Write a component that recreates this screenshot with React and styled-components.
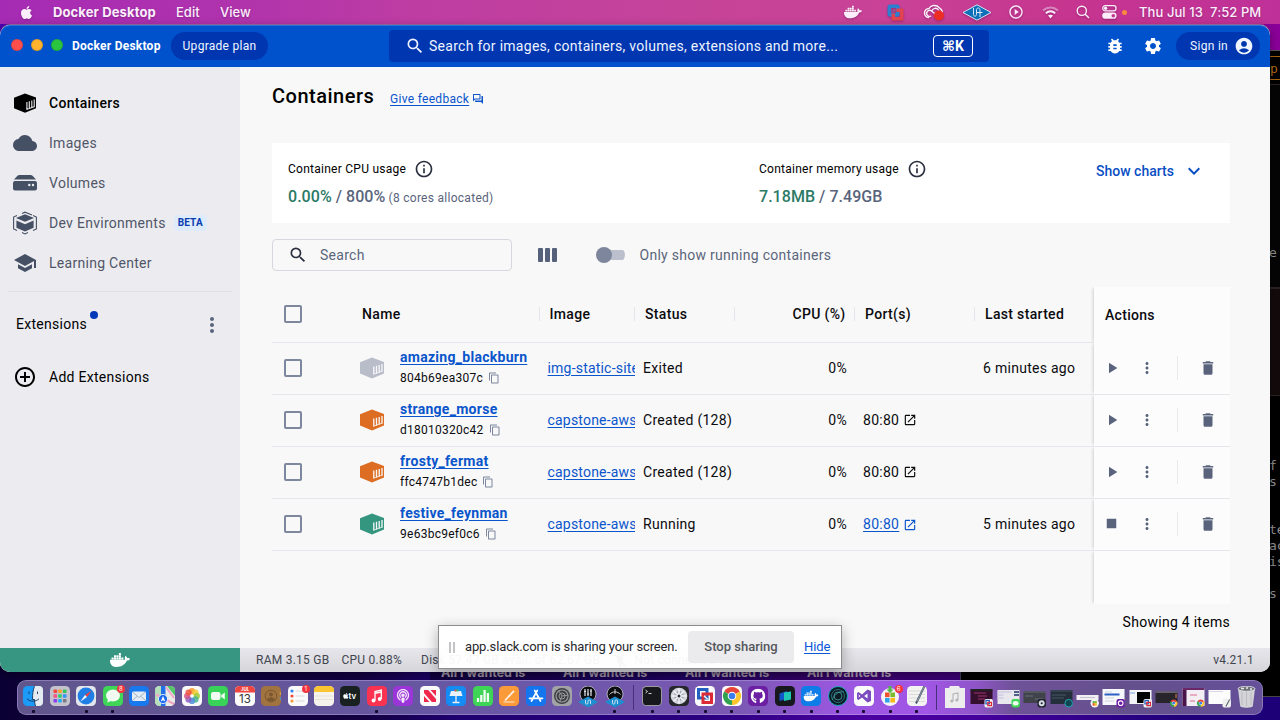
import React from "react";
import styled, { createGlobalStyle, css } from "styled-components";
import {
  MdSearch, MdBugReport, MdSettings, MdAccountCircle, MdCloud, MdSchool, MdMoreVert,
  MdControlPoint, MdInfoOutline, MdPlayArrow, MdStop, MdDelete, MdOutlineContentCopy,
  MdOpenInNew, MdKeyboardArrowDown, MdOutlineQuestionAnswer, MdPlayCircleOutline,
} from "react-icons/md";
import { FaDocker, FaApple, FaGithub, FaPodcast } from "react-icons/fa";

const GlobalStyle = createGlobalStyle`
  *, *::before, *::after { box-sizing: border-box; }
  body { margin: 0; overflow: hidden; font-family: Roboto, "Liberation Sans", sans-serif; }
  svg { display: block; flex: none; }
`;

/* ---------- desktop ---------- */
const Desktop = styled.div`
  position: relative;
  width: 1280px;
  height: 720px;
  overflow: hidden;
  background: linear-gradient(90deg, #0b0033 0%, #12003f 28%, #1f0070 36%, #2b0080 55%, #4b00a0 68%, #42009a 78%, #20007a 92%, #1d0078 100%);
`;

const UpperSky = styled.div`
  position: absolute;
  inset: 0 0 auto 0;
  height: 300px;
  background: linear-gradient(90deg, #5000b0 0%, #8a0098 100%);
`;

const MenuBar = styled.header`
  position: relative;
  height: 24px;
  display: flex;
  align-items: center;
  padding: 0 18px 0 19px;
  color: #fbeefa;
  font-family: Inter, sans-serif;
  font-size: 13px;
  font-weight: 500;
  background: linear-gradient(90deg, #a52bb4 0%, #b033ad 18%, #bd3da3 32%, #c64498 55%, #c94297 70%, #c6358f 84%, #bf3199 100%);
  svg { filter: drop-shadow(0 1px 1px rgba(60, 0, 60, 0.35)); }
`;

const MenuItem = styled.span`
  width: ${(p) => p.$w}px;
  margin-left: ${(p) => p.$gap || 0}px;
  font-weight: ${(p) => (p.$bold ? 700 : 500)};
  letter-spacing: ${(p) => p.$ls || 0}px;
  white-space: pre;
  text-shadow: 0 1px 2px rgba(60, 0, 60, 0.3);
`;

const MenuSpacer = styled.div`flex: 1;`;

const TraySlot = styled.span`
  width: ${(p) => p.$w}px;
  display: flex;
  justify-content: center;
`;

const MicDot = styled.i`
  width: 5px;
  height: 5px;
  border-radius: 50%;
  background: #f98a3c;
`;

/* ---------- windows behind ---------- */
const Terminal = styled.div`
  position: absolute;
  left: 961px;
  top: 50px;
  width: 330px;
  height: 647px;
  background: #000;
  border-top: 1px solid #555;
  border-bottom: 1px solid #444;
  font: 13px/16px "DejaVu Sans Mono", monospace;
  color: #8f8f8f;
`;

const TermPrompt = styled.div`
  margin: 5px 0 0 0;
  height: 24px;
  padding-left: 309px;
  border: 1px solid #a8630f;
  border-width: 1px 0;
  color: #b06c14;
  line-height: 24px;
`;

const TermShade = styled.div`
  margin-top: ${(p) => p.$top}px;
  height: ${(p) => p.$h}px;
  border: 1px solid #2a2222;
  border-width: 1px 0;
  background: ${(p) => p.$bg};
`;

const TermText = styled.div`
  position: absolute;
  left: 308px;
  top: ${(p) => p.$y}px;
`;

const PageBehind = styled.div`
  position: absolute;
  left: 430px;
  top: 640px;
  width: 531px;
  height: 46px;
  padding: 26px 0 0 11px;
  display: flex;
  gap: 122px;
  border-right: 1px solid #3b3550;
  background: linear-gradient(90deg, #12003f, #1f0060 45%, #3a006a 80%, #390070);
  color: #a79aae;
  font: bold 12.5px/14px Inter, sans-serif;
  white-space: nowrap;
  span { width: 0; }
  overflow: hidden;
`;

/* ---------- docker window ---------- */
const AppWindow = styled.div`
  position: absolute;
  left: 0;
  top: 25px;
  width: 1270px;
  height: 647px;
  display: flex;
  flex-direction: column;
  border-radius: 10px;
  overflow: hidden;
  background: #f8f8f8;
  box-shadow: 0 -1px 0 rgba(160, 130, 150, 0.75), 0 2px 8px rgba(0, 0, 0, 0.35);
`;

const TitleBar = styled.div`
  flex: none;
  height: 42px;
  display: flex;
  align-items: center;
  padding: 0 10px 0 11px;
  color: #fff;
  background: #0052cc;
  box-shadow: inset 0 1px 0 #2b72d8;
  border-radius: 10px 10px 0 0;
`;

const Light = styled.i`
  width: 12px;
  height: 12px;
  margin-right: 8px;
  margin-top: -2px;
  border-radius: 50%;
  background: ${(p) => p.$c};
  border: 1px solid rgba(0, 0, 0, 0.12);
`;

const AppName = styled.strong`
  width: 99px;
  margin: -1px 0 0 1px;
  font-size: 12px;
  font-weight: 700;
  letter-spacing: 0.24px;
`;

const Pill = styled.button`
  width: ${(p) => p.$w}px;
  height: 28px;
  display: flex;
  align-items: center;
  justify-content: ${(p) => (p.$end ? "flex-end" : "center")};
  gap: 6px;
  padding: 0 ${(p) => (p.$end ? 6 : 0)}px 0 0;
  border: 0;
  border-radius: 14px;
  color: #f0f5ff;
  background: #0037b0;
  font: 12px Roboto, sans-serif;
  letter-spacing: 0.28px;
`;

const GlobalSearch = styled.div`
  width: 600px;
  height: 32px;
  margin-left: 121px;
  display: flex;
  align-items: center;
  padding: 0 16px;
  border-radius: 4px;
  background: #0037b0;
  color: #eef3ff;
  font-size: 14px;
  letter-spacing: 0.28px;
  span { flex: 1; margin-left: 4px; white-space: nowrap; }
`;

const Shortcut = styled.kbd`
  width: 40px;
  height: 22px;
  display: flex;
  align-items: center;
  justify-content: center;
  border: 1px solid #fff;
  border-radius: 4px;
  color: #fff;
  font: bold 14px Roboto, "DejaVu Sans", sans-serif;
  letter-spacing: 0;
`;

const HeaderIcons = styled.div`
  flex: 1;
  display: flex;
  justify-content: flex-end;
  gap: 18px;
  margin-right: 13px;
`;

const Body = styled.div`
  flex: 1;
  display: flex;
  min-height: 0;
`;

const Sidebar = styled.nav`
  width: 240px;
  flex: none;
  padding-top: 16px;
  background: #ececf0;
`;

const NavItem = styled.div`
  height: 40px;
  display: flex;
  align-items: center;
  padding-left: 13px;
  color: ${(p) => (p.$active ? "#000" : "#505668")};
  font-size: 14px;
  font-weight: ${(p) => (p.$active ? 500 : 400)};
  letter-spacing: 0.28px;
  svg { width: 24px; height: 24px; margin-right: 12px; color: ${(p) => (p.$active ? "#000" : "#455065")}; }
`;

const BetaTag = styled.span`
  height: 16px;
  margin-left: 8px;
  padding: 0 4px;
  border-radius: 4px;
  background: #deebfb;
  color: #0a3cb0;
  font-size: 10px;
  font-weight: 700;
  letter-spacing: 0.15px;
  line-height: 16px;
`;

const Divider = styled.hr`
  margin: 8px 8px 0;
  border: 0;
  border-top: 1px solid #dedee4;
`;

const ExtensionsHead = styled.div`
  height: 32px;
  margin: 17px 16px 0;
  display: flex;
  align-items: center;
  justify-content: space-between;
  color: #000;
  font-size: 14px;
  letter-spacing: 0.28px;
  svg { color: #5a667d; }
`;

const WithDot = styled.span`
  position: relative;
  margin-top: -2px;
  &::after {
    content: "";
    position: absolute;
    right: -11px;
    top: -5px;
    width: 8px;
    height: 8px;
    border-radius: 50%;
    background: #0038b8;
  }
`;

const AddExtensions = styled(NavItem)`
  margin-top: 16px;
  color: #000;
  svg { color: #000; }
`;

const Main = styled.main`
  flex: 1;
  min-width: 0;
  display: flex;
  flex-direction: column;
  padding: 0 40px 0 32px;
`;

const Heading = styled.div`
  height: 76px;
  display: flex;
  padding-top: 16px;
  h1 { width: 118px; margin: 0; font-size: 20px; line-height: 26px; font-weight: 500; letter-spacing: 0.5px; }
`;

const Feedback = styled.a`
  height: 16px;
  margin-top: 8px;
  display: flex;
  align-items: center;
  gap: 3px;
  color: #0a55cc;
  font-size: 12px;
  letter-spacing: 0.3px;
  span { text-decoration: underline; text-underline-offset: 2px; }
`;

const UsageCard = styled.section`
  height: 80px;
  flex: none;
  display: flex;
  padding: 14px 24px 0 16px;
  background: #fff;
`;

const Usage = styled.div`
  width: ${(p) => p.$w}px;
  font-size: 12px;
  letter-spacing: 0.26px;
`;

const UsageLabel = styled.div`
  height: 24px;
  display: flex;
  align-items: center;
  gap: 8px;
  svg { color: #2b3040; }
`;

const UsageValue = styled.div`
  margin-top: 5px;
  line-height: 22px;
  color: #59647c;
  font-size: 12px;
  letter-spacing: 0.28px;
  b { font-size: 16px; font-weight: 500; letter-spacing: 0.04px; }
  b:first-child { color: #2b7a66; }
`;

const ShowCharts = styled.button`
  height: 28px;
  margin-left: auto;
  display: flex;
  align-items: center;
  gap: 8px;
  padding: 0;
  border: 0;
  background: none;
  color: #0a4fc4;
  font: 500 14px Roboto, sans-serif;
  letter-spacing: 0.02px;
`;

const FilterRow = styled.div`
  height: 64px;
  flex: none;
  display: flex;
  align-items: center;
  color: #5b667c;
  font-size: 14px;
  letter-spacing: 0.28px;
`;

const SearchField = styled.div`
  width: 240px;
  height: 32px;
  display: flex;
  align-items: center;
  gap: 12px;
  padding-left: 15px;
  border: 1px solid #d6d8df;
  border-radius: 4px;
  svg { color: #2b3040; }
`;

const ColumnsButton = styled.div`
  width: 19px;
  height: 14px;
  margin-left: 26px;
  display: flex;
  justify-content: space-between;
  i { width: 5px; border-radius: 1px; background: #56627a; }
`;

const Switch = styled.div`
  width: 29px;
  height: 16px;
  margin: 0 14.5px 0 39px;
  display: flex;
  align-items: center;
  background: linear-gradient(#bcc0cc, #bcc0cc) 8px 3px / 21px 10px no-repeat;
  border-radius: 8px;
  i { width: 16px; height: 16px; border-radius: 50%; background: #7d869c; }
`;

/* ---------- table ---------- */
const COLUMNS = "80px 188px 95px 100px 120px 120px 119px 136px";

const Table = styled.div`
  height: 317px;
  flex: none;
  display: flex;
  flex-direction: column;
  font-size: 14px;
  color: #0b0b0f;
`;

const Row = styled.div`
  flex: none;
  display: grid;
  grid-template-columns: ${COLUMNS};
  height: ${(p) => (p.$head ? 56 : 52)}px;
  border-bottom: 1px solid #e6e6ec;
`;

const HeadCell = styled.div`
  display: flex;
  align-items: center;
  justify-content: ${(p) => (p.$right ? "flex-end" : "flex-start")};
  padding: 0 9.5px 2px ${(p) => (p.$snug ? 9.5 : 10)}px;
  font-weight: 500;
  letter-spacing: 0.33px;
  white-space: nowrap;
  background: ${(p) =>
    p.$rule ? "linear-gradient(#e4e5ea, #e4e5ea) right -1px top 20px / 2px 14px no-repeat" : "none"};
`;

const Cell = styled.div`
  min-width: 0;
  display: flex;
  align-items: center;
  justify-content: ${(p) => (p.$right ? "flex-end" : "flex-start")};
  padding: 0 ${(p) => (p.$clip ? 0 : 8)}px 2px ${(p) => (p.$clip ? 7.5 : 8)}px;
  overflow: ${(p) => (p.$clip ? "hidden" : "visible")};
  letter-spacing: 0.28px;
  white-space: nowrap;
`;

const CheckCell = styled.div`
  display: flex;
  align-items: center;
  padding: 0 0 ${(p) => (p.$head ? 1 : 0)}px 12px;
`;

const Checkbox = styled.i`
  width: 18px;
  height: 18px;
  margin-top: -1px;
  border: 2px solid #7d879d;
  border-radius: 2px;
`;

const Sticky = css`
  background: #fcfcfc;
  box-shadow: -2px 0 3px -1px rgba(0, 0, 0, 0.16);
  clip-path: inset(0 0 0 -6px);
`;

const ActionHead = styled.div`
  ${Sticky}
  padding-left: 11px;
  line-height: 56px;
  font-weight: 500;
  letter-spacing: 0.3px;
`;

const ActionCell = styled.div`
  ${Sticky}
  display: flex;
  align-items: center;
  padding-bottom: 2px;
  color: #59647c;
`;

const ActionFill = styled.div`
  ${Sticky}
  flex: 1;
  width: 136px;
  margin-left: 822px;
`;

const ActionSlot = styled.span`
  width: ${(p) => p.$w}px;
  flex: none;
  display: flex;
  justify-content: center;
`;

const ActionRule = styled.i`
  width: 1px;
  height: 24px;
  margin: 0 21px 0 12px;
  flex: none;
  background: #ebebef;
`;

const Link = styled.a`
  color: #0a55cc;
  font-weight: ${(p) => (p.$bold ? 700 : 400)};
  text-decoration: underline;
  text-underline-offset: 2px;
  letter-spacing: ${(p) => (p.$tight ? 0.2 : 0.28)}px;
`;

const NameBlock = styled.div`
  margin: 0 0 0 16px;
  line-height: 20px;
`;

const IdLine = styled.div`
  display: flex;
  align-items: center;
  gap: 5px;
  height: 21px;
  font-size: 12px;
  letter-spacing: 0.26px;
  svg { color: #7d879d; }
`;

const Ports = styled.span`
  display: flex;
  align-items: center;
  gap: 4px;
  color: ${(p) => (p.$live ? "#0a55cc" : "inherit")};
  svg { margin-top: ${(p) => (p.$live ? 2 : 0)}px; }
`;

const Count = styled.div`
  padding-top: 10px;
  text-align: right;
  font-size: 14px;
  line-height: 16px;
  letter-spacing: 0.28px;
`;

/* ---------- status bar ---------- */
const StatusBar = styled.footer`
  flex: none;
  height: 24px;
  display: flex;
  background: linear-gradient(#e6e6ec, #d6d6da);
  color: #41454f;
  font-size: 12px;
  letter-spacing: 0.25px;
  line-height: 24px;
  white-space: nowrap;
`;

const EngineState = styled.div`
  width: 240px;
  display: flex;
  align-items: center;
  justify-content: center;
  color: #fff;
  background: #369681;
`;

const Stat = styled.span`
  margin-left: ${(p) => p.$gap}px;
  display: flex;
  align-items: center;
  gap: 8px;
`;

const Version = styled.span`
  margin: 0 16px 0 auto;
`;

/* ---------- share prompt ---------- */
const SharePrompt = styled.div`
  position: absolute;
  left: 438px;
  top: 625px;
  width: 404px;
  height: 44px;
  display: flex;
  align-items: center;
  padding-left: 10px;
  border: 1px solid #8c8c8e;
  background: rgba(255, 255, 255, 0.955);
  box-shadow: 0 4px 14px rgba(0, 0, 0, 0.3);
  color: #26272b;
  font-size: 13px;
  white-space: nowrap;
`;

const Grip = styled.i`
  width: 6px;
  height: 11px;
  margin-right: 10px;
  border: 2px solid #c4c4c6;
  border-width: 0 2px;
`;

const StopButton = styled.button`
  width: 106px;
  height: 32px;
  margin: 0 10px 0 0;
  padding: 0 0 1px;
  border: 0;
  border-radius: 4px;
  background: rgba(232, 232, 234, 0.85);
  color: #54565c;
  font: 500 13px Roboto, sans-serif;
`;

const HideLink = styled.a`
  margin-top: -1px;
  color: #0b57d8;
  text-decoration: underline;
  text-underline-offset: 2px;
  letter-spacing: -0.1px;
`;

const ShareText = styled.span`
  width: 223px;
  margin-top: -1px;
  letter-spacing: -0.13px;
`;

/* ---------- dock ---------- */
const DockBar = styled.div`
  position: absolute;
  left: 17px;
  top: 680px;
  width: 1246px;
  height: 35px;
  display: flex;
  padding-left: 2px;
  border: 1px solid rgba(200, 180, 240, 0.4);
  border-radius: 9px;
  background: linear-gradient(90deg, #61568b 0%, #63569a 22%, #6a57a6 40%, #7b58b4 58%, #9a57df 66%, #a156e6 73%, #8f55c8 77%, #6f5298 80%, #64508c 90%, #65509a 100%);
`;

const DockItem = styled.div`
  position: relative;
  width: 26.45px;
  flex: none;
  display: flex;
  flex-direction: column;
  align-items: center;
  padding-top: 5px;
  &::after {
    content: "";
    position: absolute;
    top: 29px;
    width: 3px;
    height: 3px;
    border-radius: 1px;
    background: ${(p) => (p.$running ? "#130a2c" : "transparent")};
  }
`;

const DockRule = styled.i`
  width: 1px;
  height: 25px;
  margin: 4px ${(p) => p.$m}px;
  background: #46307c;
`;

const Badge = styled.b`
  position: absolute;
  top: 4px;
  right: 1px;
  width: 8px;
  height: 8px;
  border-radius: 50%;
  background: #f5333c;
  color: #fff;
  font: 6px/8px Inter, sans-serif;
  text-align: center;
`;

const ContainerIcon = ({ color }) => (
  <svg width="24" height="24" viewBox="0 0 24 24">
    <path d="M12 1.500 24 6v11.600L12 22.500 0 17.600V6.200z" fill={color} />
    <path d="M13.800 10.600v7.600M16.500 9.800v7.600M19.200 9v7.500M22 8v7.500" stroke="#f8f8f8" strokeWidth="1.300" fill="none" />
    <path d="M13.200 18.300 22.600 15" stroke="#f8f8f8" strokeWidth=".8" />
  </svg>
);

const NavContainerIcon = () => (
  <svg viewBox="0 0 24 24">
    <path d="M12 2.500 23 6.600v10.600L12 21.800 1 17.200V6.800z" fill="currentColor" />
    <path d="M13.900 11v7.400M16.300 10.200v7.400M18.800 9.400v7.400M21.200 8.500v7.400M13.400 18.600l8.400-3.200" stroke="#ececf0" strokeWidth="1.100" fill="none" />
  </svg>
);

const VolumeIcon = () => (
  <svg viewBox="0 0 24 24">
    <path d="M6.500 4h11q1.200 0 2 .8l3.500 3.800H1L4.500 4.800Q5.300 4 6.500 4z" fill="currentColor" />
    <path d="M2 10h20a2 2 0 0 1 2 2v5.500a2 2 0 0 1-2 2H2a2 2 0 0 1-2-2V12a2 2 0 0 1 2-2z" fill="currentColor" />
    <circle cx="16.300" cy="14" r="1.200" fill="#ececf0" />
    <circle cx="20" cy="14" r="1.200" fill="#ececf0" />
  </svg>
);

const DevEnvIcon = () => (
  <svg viewBox="0 0 24 24" fill="none">
    <path d="m12 3.300 9 3.700-9 3.800L3 7z" fill="currentColor" />
    <path d="m3.400 9.600 8.600 3.600 8.600-3.600v7.200L12 20.600l-8.600-3.800z" fill="currentColor" />
    <path d="M4 4.600.6 6v12L4 19.500M20 4.600 23.400 6v12L20 19.500M9 2.600l3-1.400 7 2.800M9 21.600l3 1.300 3-1.300" stroke="currentColor" strokeWidth="1.100" />
  </svg>
);

/* tray drawings */
const Vmware = () => (
  <svg width="17" height="17" viewBox="0 0 17 17" fill="none">
    <rect x="2.300" y="2.300" width="8.600" height="8.600" rx="1" stroke="#2d7fd0" strokeWidth="3.600" />
    <path d="M9.500 6.300h5.200v8.400H6.300V9.500" stroke="#e2444f" strokeWidth="3.600" />
    <path d="M6.300 9.500V6.300h3.200" stroke="#9c4f8c" strokeWidth="2" />
  </svg>
);
const CreativeCloud = () => (
  <svg width="21" height="17" viewBox="0 0 21 17" fill="none">
    <path d="M6 13.500a4.500 4.500 0 0 1 0-9c1.500-3 7-4.500 10-1 3 2 4 5 2.500 8" stroke="#fbeefa" strokeWidth="1.500" />
    <path d="M8 12a3 3 0 1 1 .5-5l5 4M8.500 7.500C9.500 4 14 3 16 6.500" stroke="#fbeefa" strokeWidth="1.400" />
    <circle cx="16" cy="11.500" r="5" fill="#ee2e24" />
  </svg>
);
const UaDiamond = ({ w = 30, h = 17 }) => (
  <svg width={w} height={h} viewBox="0 0 30 17" fill="none">
    <path d="M15 .8 29 8.500 15 16.200 1 8.500z" fill="#0d70b8" stroke="#d7e6f4" strokeWidth="1" />
    <path d="M11.500 4v6.500c0 2.200 3 2.200 3 0V5.500c0-2 3.500-2 3.500 0V13M14.500 8.500h6" stroke="#d7e6f4" strokeWidth="1" />
  </svg>
);
const Wifi = () => (
  <svg width="17" height="13" viewBox="0 0 17 13" fill="none" strokeWidth="2">
    <path d="M1 4.400C5.500.6 11.500.6 16 4.400" stroke="#fbeefa" strokeOpacity=".45" />
    <path d="M3.800 7.200c3-2.400 6.400-2.400 9.400 0" stroke="#fbeefa" />
    <path d="M8.500 12.400 6 9.600c1.500-1.200 3.500-1.200 5 0z" fill="#fbeefa" />
  </svg>
);
const TraySearch = () => (
  <svg width="14" height="14" viewBox="0 0 14 14" fill="none" stroke="#fbeefa" strokeWidth="1.400">
    <circle cx="5.800" cy="5.800" r="4.600" /><path d="m9.200 9.200 3.800 3.800" />
  </svg>
);
const ControlCenter = () => (
  <svg width="15" height="14" viewBox="0 0 15 14" fill="none">
    <rect x=".7" y=".7" width="13.400" height="5.200" rx="2.600" stroke="#fbeefa" strokeWidth="1.200" />
    <circle cx="3.600" cy="3.300" r="1.700" fill="#fbeefa" />
    <rect x=".2" y="7.600" width="14.400" height="6.200" rx="3.100" fill="#fbeefa" />
    <circle cx="11.300" cy="10.700" r="1.800" fill="#c6358f" />
  </svg>
);

/* dock drawings, all on a 20 x 20 grid */
const Tile = ({ fill = "#f4f4f6", children }) => (
  <svg width="20" height="20" viewBox="0 0 20 20" fill="none">
    <rect width="20" height="20" rx="4.500" fill={fill} />
    {children}
  </svg>
);
const ring = (colors, r, sz) =>
  colors.map((c, i) => {
    const a = (i * 2 * Math.PI) / colors.length - Math.PI / 2;
    return <circle key={i} cx={10 + r * Math.cos(a)} cy={10 + r * Math.sin(a)} r={sz} fill={c} fillOpacity=".85" />;
  });

const Finder = () => (
  <Tile fill="#1b9af7">
    <path d="M11.500 0H16a4 4 0 0 1 4 4v12a4 4 0 0 1-4 4h-3.500c-.7-2-1-4-1-6.500H9.500C9.500 8 10 4 11.500 0z" fill="#e6ebf2" />
    <path d="M6 5.500v2.500M14.500 5.500v2.500M4 12.800c3.500 3.200 8.500 3.200 12 0M11.500.3C10 4 9.500 8 9.500 13.500h2c0 2.500.3 4.500 1 6.500" stroke="#11365e" strokeWidth=".9" />
  </Tile>
);
const Launchpad = () => (
  <Tile fill="#c3c2cd">
    {["#f2493c", "#f9a02c", "#35c759", "#f7577c", "#2ecf67", "#2f95f7", "#8a3ff0", "#1fb0f4", "#7a7a86"].map((c, i) => (
      <rect key={i} x={3.5 + (i % 3) * 4.7} y={3.5 + Math.floor(i / 3) * 4.7} width="3.600" height="3.600" rx=".8" fill={c} />
    ))}
  </Tile>
);
const Safari = () => (
  <Tile fill="#e3e6ea">
    <circle cx="10" cy="10" r="8.400" fill="#1f7fe6" />
    <path d="m15.800 4.500-4.800 6.600-2-2z" fill="#f0423c" /><path d="m4.200 15.700 4.800-6.600 2 2z" fill="#f3f6fa" />
  </Tile>
);
const Messages = () => (
  <Tile fill="#3fd657">
    <ellipse cx="10" cy="9.500" rx="7" ry="5.900" fill="#f1fbf2" /><path d="m5 13-.8 3.500 4.300-1.700z" fill="#f1fbf2" />
  </Tile>
);
const Mail = () => (
  <Tile fill="#1878ee">
    <rect x="3" y="5.500" width="14" height="9.500" rx="1.500" fill="#e4ebf3" />
    <path d="m3.500 6 6.500 5.500L16.500 6M3.500 14.500l4.500-4M16.500 14.500l-4.500-4" stroke="#8ba4bd" strokeWidth=".8" />
  </Tile>
);
const Maps = () => (
  <Tile fill="#e9ece6">
    <path d="M0 4.500A4.500 4.500 0 0 1 4.500 0H7v20H4.500A4.500 4.500 0 0 1 0 15.500z" fill="#b5dfb8" />
    <path d="M12 0h3.500A4.500 4.500 0 0 1 20 4.500V10z" fill="#53c768" /><path d="M6 0h4.500v20H6z" fill="#2270e8" />
    <path d="m1 8.500 18 9.500M11 1l8 11" stroke="#f2a4c5" strokeWidth="2" />
    <circle cx="8" cy="13" r="4.600" fill="#1e6cf0" stroke="#fff" strokeWidth=".8" /><path d="m8 10 2.300 5.500L8 14.300l-2.300 1.200z" fill="#fff" />
  </Tile>
);
const Photos = () => (
  <Tile fill="#fafafa">{ring(["#f8982c", "#f3cb30", "#9ccc3c", "#4cb58c", "#4d8fdc", "#8a62c4", "#d45587", "#ef5340"], 4.9, 3.1)}</Tile>
);
const Facetime = () => (
  <Tile fill="#38d259"><rect x="3" y="6" width="9.500" height="8" rx="2.200" fill="#f1fbf2" /><path d="m13.200 9.200 3.600-2.700v7l-3.600-2.700z" fill="#f1fbf2" /></Tile>
);
const CalendarApp = () => (
  <Tile fill="#fbfbfb">
    <path d="M0 6.500v-2A4.500 4.500 0 0 1 4.500 0h11A4.500 4.500 0 0 1 20 4.500v2z" fill="#ee4540" />
    <text x="10" y="5.400" textAnchor="middle" fontSize="4.500" fontWeight="700" fontFamily="Inter" fill="#fff">JUL</text>
    <text x="10" y="16.800" textAnchor="middle" fontSize="11.500" fontFamily="Inter" fill="#333">13</text>
  </Tile>
);
const Contacts = () => (
  <Tile fill="#a0733f">
    <circle cx="10" cy="10" r="5.800" stroke="#7b5730" /><circle cx="10" cy="8.400" r="2" fill="#7b5730" />
    <path d="M6 13.500c1.500-3 6.500-3 8 0-2 2-6 2-8 0z" fill="#7b5730" /><path d="M19.300 6v3" stroke="#e0a63a" /><path d="M19.300 11v3" stroke="#4f9ad8" />
  </Tile>
);
const Reminders = () => (
  <Tile fill="#fafafa">
    <circle cx="4" cy="5" r="1.600" fill="#2d84f2" /><circle cx="4" cy="10" r="1.600" fill="#ee4c41" /><circle cx="4" cy="15" r="1.600" fill="#f39a36" />
    <path d="M7.500 5h9M7.500 10h9M7.500 15h9" stroke="#cfcfd3" strokeWidth=".8" />
  </Tile>
);
const Notes = () => (
  <Tile fill="#f5f3ec">
    <path d="M0 6v-1.500A4.500 4.500 0 0 1 4.500 0h11A4.500 4.500 0 0 1 20 4.500V6z" fill="#fbc531" />
    <path d="M1 10h18M1 13.500h18" stroke="#dad6c9" strokeWidth=".6" />
  </Tile>
);
const AppleTv = () => (
  <Tile fill="#18211f">
    <g transform="translate(2.300 6.300)"><FaApple size={7} color="#fff" /></g>
    <text x="8.600" y="13" fontSize="8" fontWeight="600" fontFamily="Inter" fill="#fff">tv</text>
  </Tile>
);
const Music = () => (
  <Tile fill="#fb3350">
    <path d="M8 14.500V5.600l6.300-1.500v8.800" stroke="#fff" strokeWidth="1.300" /><path d="M8 7.300 14.300 6" stroke="#fff" strokeWidth="1.500" />
    <circle cx="6.500" cy="14.500" r="1.900" fill="#fff" /><circle cx="12.700" cy="13" r="1.900" fill="#fff" />
  </Tile>
);
const Podcasts = () => (
  <Tile fill="#9a35d8"><g transform="translate(3 3)"><FaPodcast size={14} color="#f3e3fb" /></g></Tile>
);
const News = () => (
  <Tile fill="#fafafa"><path d="M4 4h4.200L16 13v3h-4.200L4 7z" fill="#f0294c" /><path d="M4 10v6h5.500zM16 10V4h-5.500z" fill="#f0294c" /></Tile>
);
const Keynote = () => (
  <Tile fill="#138cf5">
    <path d="M5 5h10l1.500 5h-13z" fill="#e9f2fb" /><path d="M10 10v6.500M6.500 16.500h7" stroke="#e9f2fb" strokeWidth="1.300" />
    <rect x="8.500" y="3.500" width="2" height="2" fill="#ea5447" /><rect x="10.500" y="3.500" width="2" height="2" fill="#41bd63" />
  </Tile>
);
const Numbers = () => (
  <Tile fill="#3ed455"><path d="M5 16v-4M8.300 16V9M11.600 16V4M14.900 16V7" stroke="#f1fbf2" strokeWidth="2.300" /></Tile>
);
const Pages = () => (
  <Tile fill="#fb9a38"><path d="M6 14.500 15 4.800" stroke="#fdf3e6" strokeWidth="1.700" /><path d="M4.500 16h11" stroke="#fdf3e6" strokeWidth=".9" /></Tile>
);
const AppStore = () => (
  <Tile fill="#1376ee"><path d="m11.300 4.500-5.800 10.500M8.700 4.500l5.800 10.500M3.500 12.300h7.800M13.500 12.300h3" stroke="#fff" strokeWidth="1.700" strokeLinecap="round" /></Tile>
);
const SystemSettings = () => (
  <Tile fill="#a2a3a6">
    <circle cx="10" cy="10" r="8" fill="#3f4043" /><circle cx="10" cy="10" r="6" stroke="#96979b" strokeWidth="1.200" /><circle cx="10" cy="10" r="3" stroke="#96979b" />
    <path d="m10 10 6.500-1M10 10l-2.500 6M10 10 6.500 4.500" stroke="#96979b" />
  </Tile>
);
const Console = ({ alt }) => (
  <svg width="20" height="22" viewBox="0 0 20 22" fill="none">
    <circle cx="10" cy="8" r="8" fill="#0c0d10" stroke="#c6c9d0" strokeWidth=".8" />
    {alt ? <path d="M4.500 8.500c3-3.500 8-3.500 11 0M10 8V3" stroke="#e4e4e8" strokeWidth=".9" /> : <path d="M7 3v7M10 3v7M13 3v7M6 5.500h2M9 8h2M12 5h2" stroke="#e4e4e8" strokeWidth="1.200" />}
    <path d="m10 10.500 10 5.500-10 5.500L0 16z" fill="#1d8fd0" />
    <path d="M7.500 14v3c0 1.500 2.500 1.500 2.500 0v-2c0-1.500 2.500-1.500 2.500 0v3" stroke="#d7e6f4" strokeWidth=".9" />
  </svg>
);
const TerminalApp = () => (
  <Tile fill="#9b9ba1"><rect x="1" y="1" width="18" height="18" rx="3.600" fill="#17181b" /><path d="m3.500 4 2 1.500-2 1.500M6.500 7.500h3" stroke="#e8e8e8" strokeWidth=".9" /></Tile>
);
const Logic = () => (
  <Tile fill="#26272d"><circle cx="10" cy="10" r="8.300" fill="#d2d5db" /><circle cx="10" cy="10" r="5" fill="#a3a9b6" /><path d="m5 5 10 10M15 5 5 15M10 2.500v15M2.500 10h15" stroke="#f3f5f8" strokeWidth="1.500" /><circle cx="10" cy="10" r="1.500" fill="#272b34" /></Tile>
);
const Fusion = () => (
  <Tile fill="#fafafa"><rect x="3.500" y="3.500" width="8.500" height="8.500" stroke="#2460c0" strokeWidth="3" /><path d="M8 8h8.500v8.500H8z" stroke="#dc2b36" strokeWidth="3" /><path d="m9 10 3.500 3" stroke="#fafafa" strokeWidth="1.500" /></Tile>
);
const chromeDisc = (
  <>
    <path d="M10 10 2.200 5.500A9 9 0 0 1 17.800 5.500z" fill="#e8453a" /><path d="M10 10 17.800 5.500A9 9 0 0 1 10 19z" fill="#fbc52d" />
    <path d="M10 10v9A9 9 0 0 1 2.200 5.500z" fill="#31a350" /><circle cx="10" cy="10" r="4.300" fill="#fff" /><circle cx="10" cy="10" r="3.300" fill="#3b7ded" />
  </>
);
const Chrome = () => <Tile fill="#fafafa">{chromeDisc}</Tile>;
const Github = () => <Tile fill="#6c1fa2"><g transform="translate(2.500 2.500)"><FaGithub size={15} color="#fff" /></g></Tile>;
const Streamdeck = () => (
  <Tile fill="#17181d"><path d="M4.500 7.500 12 5v8l-7.500 2z" fill="#1257c9" /><path d="M9 6.500 16 5.500v8L9 15z" fill="#1fc7b4" /></Tile>
);
const DockerApp = () => <Tile fill="#0f7de8"><g transform="translate(2.500 2.500)"><FaDocker size={15} color="#fff" /></g></Tile>;
const Orb = () => (
  <svg width="20" height="20" viewBox="0 0 20 20" fill="none">
    <circle cx="10" cy="10" r="9.500" fill="#0b1b24" stroke="#1daac0" /><circle cx="10" cy="10" r="6.500" stroke="#2b6f78" /><circle cx="10" cy="10" r="4" stroke="#4b9a9c" strokeWidth=".8" /><path d="M4 14c3-7 8-9 12-8" stroke="#45b3ba" strokeWidth=".7" />
  </svg>
);
const VisualStudio = () => (
  <Tile fill="#fafafa"><path d="M13.500 3.500 17 5v10l-3.500 1.500L8 11.500 4.500 14 3 13V7l1.500-1L8 8.500z" fill="#7a4cc0" /><path d="M13.500 7.500v5L10.200 10zM4.800 8.500v3L6.300 10z" fill="#fff" /></Tile>
);
const WindowsInstaller = () => (
  <svg width="20" height="20" viewBox="0 0 20 20" fill="none">
    <circle cx="10" cy="11" r="9" fill="#f4f4f6" />
    <path d="M5 6.500h4.600v4.600H5z" fill="#f0532d" /><path d="M10.400 6.500H15v4.600h-4.600z" fill="#7ebb2c" /><path d="M5 11.900h4.600v4.600H5z" fill="#2ca4e8" /><path d="M10.400 11.900H15v4.600h-4.600z" fill="#fbb916" />
    <path d="M8.500 0h3v3.500h2L10 7 6.500 3.500h2z" fill="#4fb848" />
  </svg>
);
const TextEdit = () => (
  <Tile fill="#f3f3f1"><path d="M2 5h16M2 8.500h16M2 12h16M2 15.500h16" stroke="#cfcfcf" strokeWidth=".7" /><path d="M17.500 0 9 17.500" stroke="#4d5868" strokeWidth="2" /><path d="M17.500 0 10 15.500" stroke="#a3b4c6" strokeWidth=".7" /></Tile>
);
const MusicFolder = () => (
  <svg width="20" height="22" viewBox="0 0 20 22" fill="none">
    <path d="M0 2h4l1-2h9l1 2h5v20H0z" fill="#ededee" /><path d="M8 15V8l5-1v7" stroke="#b4b4b8" strokeWidth="1.100" /><circle cx="6.800" cy="15" r="1.500" fill="#b4b4b8" /><circle cx="11.800" cy="14" r="1.500" fill="#b4b4b8" />
  </svg>
);
const badges = {
  fusion: <g><rect width="20" height="20" rx="4" fill="#f4f4f6" /><rect x="3.500" y="3.500" width="8" height="8" stroke="#2460c0" strokeWidth="3" /><path d="M8 8h8.500v8H8z" stroke="#dc2b36" strokeWidth="3" /></g>,
  messages: <g><rect width="20" height="20" rx="5" fill="#3fd657" /><ellipse cx="10" cy="10" rx="7" ry="5.500" fill="#eefbef" /></g>,
  logic: <g><rect width="20" height="20" rx="5" fill="#20242d" /><circle cx="10" cy="10" r="7" fill="#d7dce6" /><circle cx="10" cy="10" r="2.500" fill="#20242d" /></g>,
  orb: <g><circle cx="10" cy="10" r="9" fill="#0f4752" stroke="#22b4c4" strokeWidth="2" /></g>,
  win: <g><circle cx="10" cy="10" r="10" fill="#f4f4f6" /><path d="M5 5h5v5H5z" fill="#4fb848" /><path d="M10 5h5v5h-5z" fill="#7ebb2c" /><path d="M5 10h5v6H5z" fill="#f0532d" /><path d="M10 10h5v6h-5z" fill="#fbb916" /></g>,
  github: <g><rect width="20" height="20" rx="5" fill="#6c1fa2" /><circle cx="10" cy="10" r="5.500" stroke="#fff" strokeWidth="2.500" /></g>,
  chrome: chromeDisc,
  edit: <g><rect width="20" height="20" rx="4" fill="#f0f0ee" /><path d="M17 1 8 18" stroke="#55606f" strokeWidth="2.500" /></g>,
};
const Thumb = ({ fill, y = 4, h = 14, badge, children }) => (
  <svg width="23" height="22" viewBox="0 0 23 22" fill="none">
    <rect x=".5" y={y} width="22" height={h} fill={fill} />
    {children}
    <g transform="translate(14.500 13) scale(.42)">{badges[badge]}</g>
  </svg>
);
const Trash = () => (
  <svg width="19" height="22" viewBox="0 0 19 22" fill="none">
    <path d="M1 2.500h17L15.800 20c-.3 2.300-12.300 2.300-12.600 0z" fill="#d3d3d8" /><path d="M5 5v14M9.500 5v15M14 5v14" stroke="#b8b8c0" strokeWidth=".9" />
    <ellipse cx="9.500" cy="2.800" rx="8.500" ry="2.500" fill="#6f7377" stroke="#e9e9ec" strokeWidth=".8" /><path d="M4 2.500h3M9 2h2M13 3h2" stroke="#e8ecef" strokeWidth="1.300" />
  </svg>
);

const dockLeft = [
  [Finder, 1], [Launchpad], [Safari, 1], [Messages, 1, "8"], [Mail], [Maps], [Photos], [Facetime], [CalendarApp],
  [Contacts], [Reminders, 0, "1"], [Notes], [AppleTv], [Music, 1], [Podcasts], [News], [Keynote], [Numbers], [Pages],
  [AppStore], [SystemSettings], [Console], [() => <Console alt />, 1],
];
const dockMiddle = [
  [TerminalApp, 1], [Logic, 1], [Fusion, 1], [Chrome, 1], [Github, 1], [Streamdeck, 1], [DockerApp, 1], [Orb, 1],
  [VisualStudio, 1], [WindowsInstaller, 1, "6"], [TextEdit, 1],
];
const dockRight = [
  [MusicFolder],
  [() => <Thumb fill="#35102e" badge="fusion"><path d="M.5 4h22" stroke="#222" strokeWidth="2" /><path d="M4 7h12M8 10h9M8 13h7" stroke="#a03468" strokeWidth="1" /></Thumb>],
  [() => <Thumb fill="#e9e7ee" badge="messages"><path d="M.5 6h14M.5 9h6M.5 12h6" stroke="#d6d2e6" strokeWidth="2" /><path d="M17 6h5M17 9h5" stroke="#4f5f86" strokeWidth="2" /></Thumb>],
  [() => <Thumb fill="#41434a" y={5} h={12} badge="logic"><path d="M.5 6h22M2 10h8M12 13h8" stroke="#6e7a8c" strokeWidth=".8" /></Thumb>],
  [() => <Thumb fill="#242f3b" y={4} h={14} badge="orb"><path d="M.5 5h22M2 9h14M2 12h12" stroke="#51606e" strokeWidth=".8" /></Thumb>],
  [() => <Thumb fill="#f2eff4" y={9} h={5} badge="win"><path d="M4 11.500h15" stroke="#c7c1cf" strokeWidth="1" /></Thumb>],
  [() => <Thumb fill="#f7f8fb" y={3} h={16} badge="github"><path d="M2.500 8.500h15" stroke="#2c5fc4" strokeWidth="2" /><path d="M3 6h7M3 12h9M3 15h9" stroke="#c5cad6" strokeWidth=".8" /></Thumb>],
  [() => <Thumb fill="#f4f4f8" y={4} h={14} badge="fusion"><path d="M1 7h5" stroke="#7aa2e2" /><rect x="8" y="6" width="13" height="11" fill="#000" /></Thumb>],
  [() => <Thumb fill="#27242b" y={5} h={12} badge="chrome"><path d="M.5 6h22" stroke="#a99ab8" /><path d="M20 9h2M20 11h2" stroke="#e08148" /></Thumb>],
  [() => <Thumb fill="#f3eef3" y={2} h={18} badge="chrome"><path d="M.5 3h22" stroke="#6a2868" strokeWidth="2" /><path d="M2.500 4v16" stroke="#4a154b" strokeWidth="4" /><path d="M8 9h7M8 15h5" stroke="#d86b8e" /></Thumb>],
  [() => <Thumb fill="#fcfcfd" y={4} h={14} badge="edit"><path d="M1 5.500h14" stroke="#dad7e2" /></Thumb>],
  [Trash],
];

const DockGroup = ({ items }) =>
  items.map(([Icon, running, badge], i) => (
    <DockItem key={i} $running={running}>
      <Icon />
      {badge && <Badge>{badge}</Badge>}
    </DockItem>
  ));

const nav = [
  { label: "Containers", icon: <NavContainerIcon />, active: true },
  { label: "Images", icon: <MdCloud /> },
  { label: "Volumes", icon: <VolumeIcon /> },
  { label: "Dev Environments", icon: <DevEnvIcon />, beta: true },
  { label: "Learning Center", icon: <MdSchool /> },
];

const containers = [
  { name: "amazing_blackburn", id: "804b69ea307c", color: "#b9bdca", image: "img-static-site", status: "Exited", ports: "", started: "6 minutes ago" },
  { name: "strange_morse", id: "d18010320c42", color: "#dc6d22", image: "capstone-aws", status: "Created (128)", ports: "80:80", started: "" },
  { name: "frosty_fermat", id: "ffc4747b1dec", color: "#dc6d22", image: "capstone-aws", status: "Created (128)", ports: "80:80", started: "" },
  { name: "festive_feynman", id: "9e63bc9ef0c6", color: "#35967f", image: "capstone-aws", status: "Running", ports: "80:80", started: "5 minutes ago", running: true },
];

const ContainerRow = ({ c }) => (
  <Row>
    <CheckCell><Checkbox /></CheckCell>
    <Cell>
      <ContainerIcon color={c.color} />
      <NameBlock>
        <Link $bold>{c.name}</Link>
        <IdLine>{c.id}<MdOutlineContentCopy size={12} /></IdLine>
      </NameBlock>
    </Cell>
    <Cell $clip><Link $tight>{c.image}</Link></Cell>
    <Cell>{c.status}</Cell>
    <Cell $right>0%</Cell>
    <Cell>
      {c.ports && (
        <Ports $live={c.running}>
          {c.running ? <Link>{c.ports}</Link> : c.ports}
          <MdOpenInNew size={14} />
        </Ports>
      )}
    </Cell>
    <Cell>{c.started}</Cell>
    <ActionCell>
      <ActionSlot $w={35}>{c.running ? <MdStop size={19} /> : <MdPlayArrow size={18} />}</ActionSlot>
      <ActionSlot $w={36}><MdMoreVert size={18} /></ActionSlot>
      <ActionRule />
      <MdDelete size={18} />
    </ActionCell>
  </Row>
);

export default function App() {
  return (
    <Desktop>
      <GlobalStyle />
      <UpperSky />
      <MenuBar>
        <FaApple size={15} />
        <MenuItem $w={104} $gap={19} $ls={0.12} $bold>Docker Desktop</MenuItem>
        <MenuItem $w={24} $gap={19}>Edit</MenuItem>
        <MenuItem $w={30} $gap={20}>View</MenuItem>
        <MenuSpacer />
        <TraySlot $w={50}><FaDocker size={18} /></TraySlot>
        <TraySlot $w={34}><Vmware /></TraySlot>
        <TraySlot $w={42}><CreativeCloud /></TraySlot>
        <TraySlot $w={46}><UaDiamond /></TraySlot>
        <TraySlot $w={32}><MdPlayCircleOutline size={16} /></TraySlot>
        <TraySlot $w={36}><Wifi /></TraySlot>
        <TraySlot $w={30}><TraySearch /></TraySlot>
        <TraySlot $w={23}><ControlCenter /></TraySlot>
        <TraySlot $w={7}><MicDot /></TraySlot>
        <MenuItem $w={123} $gap={11} $ls={0.08}>{"Thu Jul 13  7:52 PM"}</MenuItem>
      </MenuBar>

      <Terminal>
        <TermPrompt>p</TermPrompt>
        <TermShade $top={4} $h={204} $bg="#050505" />
        <TermShade $top={0} $h={108} $bg="#130b0b" />
        <TermText $y={194}>e</TermText>
        <TermText $y={407}>f</TermText>
        <TermText $y={423}>s</TermText>
        <TermText $y={471}>te</TermText>
        <TermText $y={487}>ac</TermText>
        <TermText $y={503}>is</TermText>
        <TermText $y={535}>s</TermText>
      </Terminal>
      <PageBehind>
        <span>All I wanted is</span>
        <span>All I wanted is</span>
        <span>All I wanted is</span>
        <span>All I wanted is</span>
      </PageBehind>

      <AppWindow>
        <TitleBar>
          <Light $c="#ff4f4d" />
          <Light $c="#ffb32e" />
          <Light $c="#2bc640" />
          <AppName>Docker Desktop</AppName>
          <Pill $w={97}>Upgrade plan</Pill>
          <GlobalSearch>
            <MdSearch size={20} />
            <span>Search for images, containers, volumes, extensions and more...</span>
            <Shortcut>⌘K</Shortcut>
          </GlobalSearch>
          <HeaderIcons>
            <MdBugReport size={20} />
            <MdSettings size={20} />
          </HeaderIcons>
          <Pill $w={84} $end>Sign in<MdAccountCircle size={20} /></Pill>
        </TitleBar>

        <Body>
          <Sidebar>
            {nav.map((n) => (
              <NavItem key={n.label} $active={n.active}>
                {n.icon}
                {n.label}
                {n.beta && <BetaTag>BETA</BetaTag>}
              </NavItem>
            ))}
            <Divider />
            <ExtensionsHead>
              <WithDot>Extensions</WithDot>
              <MdMoreVert size={24} />
            </ExtensionsHead>
            <AddExtensions><MdControlPoint />Add Extensions</AddExtensions>
          </Sidebar>

          <Main>
            <Heading>
              <h1>Containers</h1>
              <Feedback><span>Give feedback</span><MdOutlineQuestionAnswer size={12} /></Feedback>
            </Heading>

            <UsageCard>
              <Usage $w={471}>
                <UsageLabel>Container CPU usage<MdInfoOutline size={20} /></UsageLabel>
                <UsageValue><b>0.00%</b><b> / 800%</b> (8 cores allocated)</UsageValue>
              </Usage>
              <Usage $w={200}>
                <UsageLabel>Container memory usage<MdInfoOutline size={20} /></UsageLabel>
                <UsageValue><b>7.18MB</b><b> / 7.49GB</b></UsageValue>
              </Usage>
              <ShowCharts>Show charts<MdKeyboardArrowDown size={24} /></ShowCharts>
            </UsageCard>

            <FilterRow>
              <SearchField><MdSearch size={20} />Search</SearchField>
              <ColumnsButton><i /><i /><i /></ColumnsButton>
              <Switch><i /></Switch>
              Only show running containers
            </FilterRow>

            <Table>
              <Row $head>
                <CheckCell $head><Checkbox /></CheckCell>
                <HeadCell $rule>Name</HeadCell>
                <HeadCell $rule $snug>Image</HeadCell>
                <HeadCell $rule>Status</HeadCell>
                <HeadCell $rule $right>CPU (%)</HeadCell>
                <HeadCell $rule>Port(s)</HeadCell>
                <HeadCell>Last started</HeadCell>
                <ActionHead>Actions</ActionHead>
              </Row>
              {containers.map((c) => <ContainerRow key={c.id} c={c} />)}
              <ActionFill />
            </Table>
            <Count>Showing 4 items</Count>
          </Main>
        </Body>

        <StatusBar>
          <EngineState><FaDocker size={20} /></EngineState>
          <Stat $gap={16}>RAM 3.15 GB</Stat>
          <Stat $gap={12}>CPU 0.88%</Stat>
          <Stat $gap={19}>Disk 57.47 GB avail. of 62.67 GB</Stat>
          <Stat $gap={14}>
            <svg width="12" height="13" viewBox="0 0 12 13" fill="none">
              <path d="M3 2h6v6L7 10v3H5v-3L3 8z" fill="#41454f" /><path d="m1 1 10 11" stroke="#41454f" strokeWidth="1.500" />
            </svg>
            Not connected to Hub
          </Stat>
          <Version>v4.21.1</Version>
        </StatusBar>
      </AppWindow>

      <SharePrompt>
        <Grip />
        <ShareText>app.slack.com is sharing your screen.</ShareText>
        <StopButton>Stop sharing</StopButton>
        <HideLink>Hide</HideLink>
      </SharePrompt>

      <DockBar>
        <DockGroup items={dockLeft} />
        <DockRule $m={5.1} />
        <DockGroup items={dockMiddle} />
        <DockRule $m={5.5} />
        <DockGroup items={dockRight} />
      </DockBar>
    </Desktop>
  );
}
